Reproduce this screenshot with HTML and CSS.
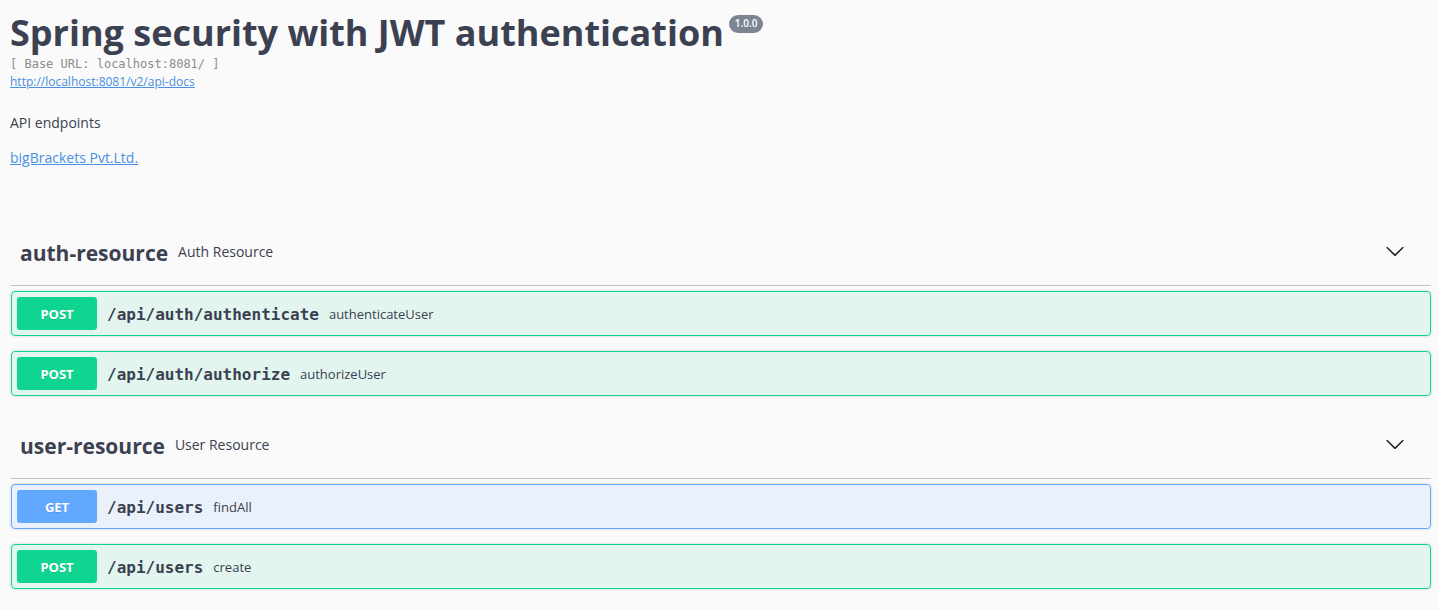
FILE: index.html
```html
<!DOCTYPE html>
<html lang="en">
<head>
<meta charset="utf-8">
<title>Spring security with JWT authentication</title>
<link rel="stylesheet" href="styles.css">
</head>
<body>
<div class="page">
  <div class="info">
    <div class="hgroup">
      <h2 class="title">Spring security with JWT authentication<small class="version"><span>1.0.0</span></small></h2>
      <pre class="base-url">[ Base URL: localhost:8081/ ]</pre>
      <a class="spec-link" href="#">http://localhost:8081/v2/api-docs</a>
    </div>
    <p class="desc-text">API endpoints</p>
    <div class="contact"><a href="#">bigBrackets Pvt.Ltd.</a></div>
  </div>

  <section class="tag-section">
    <h3 class="tag-heading">
      <span class="tag-name">auth-resource</span>
      <small class="tag-desc">Auth Resource</small>
      <svg class="arrow" width="20" height="20" viewBox="0 0 20 20"><path d="M17.418 6.109c.272-.268.709-.268.979 0s.271.701 0 .969l-7.908 7.83c-.27.268-.707.268-.979 0l-7.908-7.830c-.27-.268-.27-.701 0-.969.271-.268.709-.268.979 0L10 13.25l7.418-7.141z"/></svg>
    </h3>
    <div class="opblock post">
      <div class="summary"><span class="method">POST</span><span class="path">/api/auth/authenticate</span><span class="op-desc">authenticateUser</span></div>
    </div>
    <div class="opblock post">
      <div class="summary"><span class="method">POST</span><span class="path">/api/auth/authorize</span><span class="op-desc">authorizeUser</span></div>
    </div>
  </section>

  <section class="tag-section">
    <h3 class="tag-heading">
      <span class="tag-name">user-resource</span>
      <small class="tag-desc">User Resource</small>
      <svg class="arrow" width="20" height="20" viewBox="0 0 20 20"><path d="M17.418 6.109c.272-.268.709-.268.979 0s.271.701 0 .969l-7.908 7.83c-.27.268-.707.268-.979 0l-7.908-7.830c-.27-.268-.27-.701 0-.969.271-.268.709-.268.979 0L10 13.25l7.418-7.141z"/></svg>
    </h3>
    <div class="opblock get">
      <div class="summary"><span class="method">GET</span><span class="path">/api/users</span><span class="op-desc">findAll</span></div>
    </div>
    <div class="opblock post">
      <div class="summary"><span class="method">POST</span><span class="path">/api/users</span><span class="op-desc">create</span></div>
    </div>
  </section>
</div>
</body>
</html>
```
FILE: styles.css
```css
html, body {
  margin: 0;
  padding: 0;
  background: #fafafa;
}
body {
  font-family: "Open Sans", sans-serif;
  color: #3b4151;
}
.page {
  padding: 8px 8px 0 11px;
}
.info {
  margin: 0 0 50px -1px;
}
.hgroup {
  display: flex;
  flex-direction: column;
  align-items: flex-start;
}
.title {
  margin: 0;
  font-family: "Open Sans", sans-serif;
  font-size: 36px;
  font-weight: 700;
  line-height: 49px;
  color: #3b4151;
}
.version {
  display: inline-block;
  vertical-align: top;
  margin: 7px 0 0 5px;
  padding: 2px 6px;
  border-radius: 57px;
  background: #7d8492;
  font-size: 10px;
  line-height: 13.6px;
  font-weight: 600;
  color: #fff;
}
.base-url {
  margin: 0;
  font-family: "DejaVu Sans Mono", monospace;
  font-size: 12px;
  line-height: 14px;
  color: #8b8b8b;
}
.spec-link {
  margin-top: 3px;
  font-size: 12px;
  line-height: 16px;
  color: #4990e2;
}
.desc-text {
  margin: 22px 0 14px;
  font-size: 14px;
  line-height: 21px;
  color: #3b4151;
}
.contact {
  font-size: 14px;
  line-height: 21px;
}
.contact a {
  color: #4990e2;
}
.tag-section {
  display: flex;
  flex-direction: column;
}
.tag-heading {
  display: flex;
  align-items: center;
  box-sizing: border-box;
  height: 68px;
  margin: 0 0 5px;
  padding: 0 26px 0 9px;
  border-bottom: 1px solid rgba(59, 65, 81, 0.3);
  font-weight: normal;
}
.tag-name {
  font-size: 21px;
  font-weight: 700;
  line-height: 29px;
  margin-top: 3px;
  color: #3b4151;
}
.tag-desc {
  flex: 1;
  padding: 0 10px;
  font-size: 14px;
  line-height: 19px;
  color: #3b4151;
}
.arrow {
  display: block;
  fill: #1b1b1b;
  margin-top: -2px;
}
.opblock {
  margin: 0 0 15px;
  border: 1px solid #000;
  border-radius: 4px;
  box-shadow: 0 0 3px rgba(0, 0, 0, 0.19);
}
.summary {
  display: flex;
  align-items: center;
  padding: 5px;
}
.method {
  display: flex;
  align-items: center;
  justify-content: center;
  width: 80px;
  height: 33px;
  border-radius: 3px;
  font-size: 13px;
  font-weight: 700;
  color: #fff;
  text-shadow: 0 1px 0 rgba(0, 0, 0, 0.1);
}
.path {
  padding: 0 10px;
  margin-top: 2px;
  font-family: "DejaVu Sans Mono", monospace;
  font-size: 16px;
  font-weight: 700;
  color: #3b4151;
}
.op-desc {
  font-size: 13px;
  color: #3b4151;
}
.post {
  border-color: #10d590;
  background: rgba(16, 213, 144, 0.1);
}
.post .method {
  background: #10d590;
}
.get {
  border-color: #61a8fe;
  background: rgba(97, 168, 254, 0.1);
}
.get .method {
  background: #61a8fe;
}
```
